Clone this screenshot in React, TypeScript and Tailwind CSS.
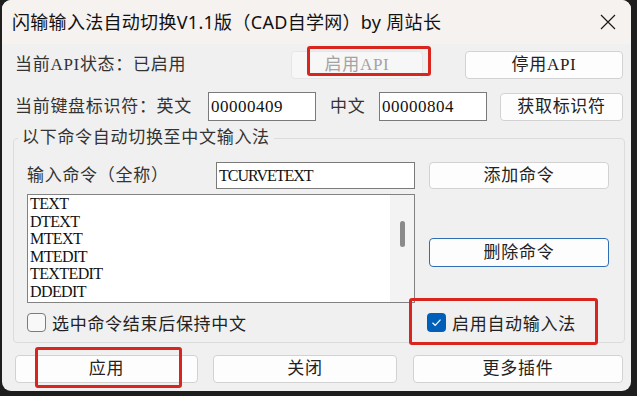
import React from "react";

const commands = ["TEXT", "DTEXT", "MTEXT", "MTEDIT", "TEXTEDIT", "DDEDIT"];

function Btn({
  className,
  children,
}: {
  className: string;
  children: React.ReactNode;
}) {
  return (
    <div
      className={
        "flex shrink-0 items-center justify-center rounded-[4px] border bg-[#fdfdfd] text-[17px] tracking-[0.7px] " +
        className
      }
    >
      {children}
    </div>
  );
}

function Field({ value, className }: { value: string; className: string }) {
  return (
    <div
      className={
        "flex shrink-0 items-center border border-[#7a7a7a] bg-white pl-[2px] font-['Liberation_Serif',serif] text-[#111] " +
        className
      }
    >
      {value}
    </div>
  );
}

export default function App() {
  return (
    <div className="h-[396px] w-[637px] overflow-hidden bg-[#1e1e1e]">
      <div className="relative ml-[2px] h-[391px] w-[629px] overflow-hidden rounded-[9px] bg-[#f0f0f0] font-['Liberation_Serif','Noto_Sans_CJK_SC',serif] text-[#1b1b1b]">
        {/* title bar */}
        <div className="flex h-[44px] items-center bg-[#f6f2f0] pl-[10px] pr-[15px]">
          <span className="font-['Noto_Sans','Noto_Sans_CJK_SC',sans-serif] text-[18px] leading-none tracking-[0.3px] text-[#111]">
            闪输输入法自动切换V1.1版（CAD自学网）by 周站长
          </span>
          <svg className="ml-auto" width="16" height="16" viewBox="0 0 16 16">
            <path d="M1 1 L15 15 M15 1 L1 15" stroke="#1a1a1a" strokeWidth="1.2" fill="none" />
          </svg>
        </div>

        {/* api state */}
        <div className="mt-[7px] flex h-[28px] items-center pl-[13px]">
          <span className="w-[276px] shrink-0 text-[17px] tracking-[0.7px] text-[#333]">当前API状态：已启用</span>
          <Btn className="h-[28px] w-[132px] border-[#e6e6e6] !bg-[#f7f7f7] text-[#a3a3a3]">启用API</Btn>
          <Btn className="ml-[42px] h-[28px] w-[158px] border-[#d2d2d2] text-[#222]">停用API</Btn>
        </div>

        {/* keyboard ids */}
        <div className="mt-[13px] flex h-[29px] items-center pl-[13px]">
          <span className="w-[193px] shrink-0 text-[17px] tracking-[0.7px] text-[#333]">当前键盘标识符：英文</span>
          <Field value="00000409" className="h-[29px] w-[108px] text-[17px] tracking-[0.5px]" />
          <span className="ml-[14px] w-[49px] shrink-0 text-[17px] tracking-[0.7px] text-[#333]">中文</span>
          <Field value="00000804" className="h-[29px] w-[108px] text-[17px] tracking-[0.5px]" />
          <Btn className="ml-[13px] h-[28px] w-[123px] border-[#d2d2d2] text-[#222]">获取标识符</Btn>
        </div>

        {/* group */}
        <fieldset className="ml-[11px] mt-[7px] w-[612px] rounded-[4px] border border-[#dcdcdc]">
          <legend className="ml-[4px] px-[4px] text-[17px] leading-[20px] tracking-[0.7px] text-[#333]">
            以下命令自动切换至中文输入法
          </legend>
          <div className="pb-[10px] pl-[13px] pt-[14px]">
            <div className="flex h-[27px] items-center">
              <span className="w-[189px] shrink-0 text-[17px] tracking-[0.7px] text-[#333]">输入命令（全称）</span>
              <Field value="TCURVETEXT" className="h-[27px] w-[199px] text-[16px] tracking-[-1px]" />
              <Btn className="ml-[14px] h-[27px] w-[180px] border-[#d2d2d2] text-[#222]">添加命令</Btn>
            </div>

            <div className="mt-[5px] flex">
              <div className="flex h-[109px] w-[388px] shrink-0 border border-[#828282] bg-white">
                <div className="flex-1 pl-[2px] font-['Liberation_Serif',serif] text-[16px] leading-[17.6px] tracking-[-0.6px] text-[#111]">
                  {commands.map((c) => (
                    <div key={c}>{c}</div>
                  ))}
                </div>
                <div className="flex w-[24px] justify-center bg-[#f3f3f3] pt-[26px]">
                  <div className="h-[26px] w-[5px] rounded-full bg-[#8a8a8a]" />
                </div>
              </div>
              <Btn className="ml-[14px] mt-[44px] h-[29px] w-[180px] border-[#2f6db5] text-[#222]">删除命令</Btn>
            </div>

            <div className="mt-[10px] flex h-[19px] items-center font-['Noto_Sans_CJK_SC',sans-serif] text-[17px] tracking-[0.7px] text-[#222]">
              <div className="flex w-[400px] shrink-0 items-center">
                <div className="h-[19px] w-[19px] rounded-[4px] border border-[#7b7b7b] bg-[#f8f8f8]" />
                <span className="ml-[6px]">选中命令结束后保持中文</span>
              </div>
              <div className="flex h-[19px] w-[19px] items-center justify-center rounded-[4px] bg-[#005fb8]">
                <svg width="11" height="11" viewBox="0 0 11 11">
                  <path d="M1.5 5.8 L4.2 8.3 L9.5 2.6" stroke="#fff" strokeWidth="1.2" fill="none" />
                </svg>
              </div>
              <span className="ml-[6px]">启用自动输入法</span>
            </div>
          </div>
        </fieldset>

        {/* bottom buttons */}
        <div className="mt-[12px] flex pl-[13px]">
          <Btn className="h-[28px] w-[183px] border-[#d2d2d2] text-[#222]">应用</Btn>
          <Btn className="ml-[15px] h-[28px] w-[184px] border-[#d2d2d2] text-[#222]">关闭</Btn>
          <Btn className="ml-[16px] h-[28px] w-[210px] border-[#d2d2d2] text-[#222]">更多插件</Btn>
        </div>

        {/* red highlight marks */}
        <div className="absolute left-[305px] top-[46px] h-[30px] w-[124px] rounded-[3px] border-[3px] border-[#d8261f]" />
        <div className="absolute left-[407px] top-[298px] h-[47px] w-[189px] rounded-[3px] border-[3px] border-[#d8261f]" />
        <div className="absolute left-[33px] top-[347px] h-[41px] w-[147px] rounded-[3px] border-[3px] border-[#d8261f]" />
      </div>
    </div>
  );
}
